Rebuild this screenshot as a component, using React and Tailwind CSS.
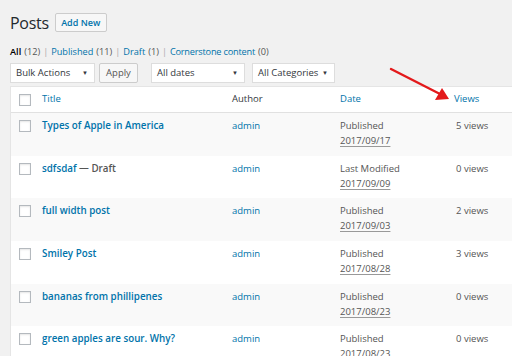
import React from 'react';

const posts = [
  { title: 'Types of Apple in America', status: 'Published', date: '2017/09/17', views: '5 views' },
  { title: 'sdfsdaf', draft: true, status: 'Last Modified', date: '2017/09/09', views: '0 views' },
  { title: 'full width post', status: 'Published', date: '2017/09/03', views: '2 views' },
  { title: 'Smiley Post', status: 'Published', date: '2017/08/28', views: '3 views' },
  { title: 'bananas from phillipenes', status: 'Published', date: '2017/08/23', views: '0 views' },
  { title: 'green apples are sour. Why?', status: 'Published', date: '2017/08/23', views: '0 views' },
];

const Checkbox = () => (
  <span className="block w-[12px] h-[12px] bg-white border border-[#b4b9be] shadow-[inset_0_1px_2px_rgba(0,0,0,0.1)]"></span>
);

const Select = ({ label, width }) => (
  <div className={`${width} h-[20px] bg-white border border-[#ddd] flex items-center justify-between pl-[5px] pr-[6px] text-[#32373c]`}>
    <span>{label}</span>
    <span className="text-[6px] leading-none">▼</span>
  </div>
);

const Sep = () => <span className="text-[#aaa] w-[5px] text-center">|</span>;

const cols = 'grid grid-cols-[31px_190px_108px_115px_1fr]';

export default function App() {
  return (
    <div
      className="relative w-[512px] h-[356px] overflow-hidden bg-[#f1f1f1] pl-[10px] text-[9.5px] text-[#555]"
      style={{ fontFamily: '"Open Sans", "Noto Sans", Arial, sans-serif' }}
    >
      {/* heading */}
      <div className="flex items-center gap-[6px] pt-[13px] h-[32px]">
        <h1 className="text-[16px] tracking-[-0.3px] leading-none text-[#23282d]">Posts</h1>
        <button className="h-[19px] w-[52px] bg-[#f7f7f7] border border-[#ccc] rounded-[2px] text-[9px] font-semibold text-[#0073aa]">
          Add New
        </button>
      </div>

      {/* status links */}
      <div className="flex items-center gap-[3px] mt-[13px] h-[14px] text-[9.2px]">
        <span className="text-black font-semibold">All</span>
        <span className="text-[#555]">(12)</span>
        <Sep />
        <span className="text-[#0073aa]">Published</span>
        <span className="text-[#555]">(11)</span>
        <Sep />
        <span className="text-[#0073aa]">Draft</span>
        <span className="text-[#555]">(1)</span>
        <Sep />
        <span className="text-[#0073aa] tracking-[-0.2px]">Cornerstone content</span>
        <span className="text-[#555]">(0)</span>
      </div>

      {/* filters */}
      <div className="flex items-center mt-[4px] h-[20px] text-[9.5px]">
        <Select label="Bulk Actions" width="w-[85px]" />
        <button className="ml-[4px] w-[39px] h-[20px] bg-[#f7f7f7] border border-[#ccc] rounded-[2px] text-[#555]">Apply</button>
        <div className="ml-[13px]">
          <Select label="All dates" width="w-[94px]" />
        </div>
        <div className="ml-[7px]">
          <Select label="All Categories" width="w-[83px]" />
        </div>
      </div>

      {/* table */}
      <div className="mt-[3px] bg-white border-l border-t border-[#e5e5e5]">
        <div className={`${cols} h-[26px] items-center border-b border-[#e1e1e1]`}>
          <div className="pl-[8px]"><Checkbox /></div>
          <span className="text-[#0073aa]">Title</span>
          <span className="text-[#32373c]">Author</span>
          <span className="text-[#0073aa]">Date</span>
          <span className="text-[#0073aa] -ml-[1px]">Views</span>
        </div>
        {posts.map((p, i) => (
          <div
            key={i}
            className={`${cols} h-[42.7px] pt-[5px] leading-[15px] ${i % 2 === 0 ? 'bg-[#f9f9f9]' : 'bg-white'}`}
          >
            <div className="pl-[8px] pt-[2px]"><Checkbox /></div>
            <div className="text-[9.8px] font-semibold">
              <span className="text-[#0073aa]">{p.title}</span>
              {p.draft && <span className="text-[#555]"> — Draft</span>}
            </div>
            <span className="text-[#0073aa]">admin</span>
            <div className="flex flex-col">
              <span>{p.status}</span>
              <span className="underline decoration-[#999] underline-offset-[2px]">{p.date}</span>
            </div>
            <span className="pl-[1px]">{p.views}</span>
          </div>
        ))}
      </div>

      {/* annotation arrow */}
      <svg className="absolute left-[388px] top-[66px]" width="66" height="38" viewBox="0 0 66 38">
        <line x1="3" y1="3" x2="52" y2="28" stroke="#e3191b" strokeWidth="2.4" strokeLinecap="round" />
        <polygon points="61,33 47,34 54,22" fill="#e3191b" />
      </svg>
    </div>
  );
}
